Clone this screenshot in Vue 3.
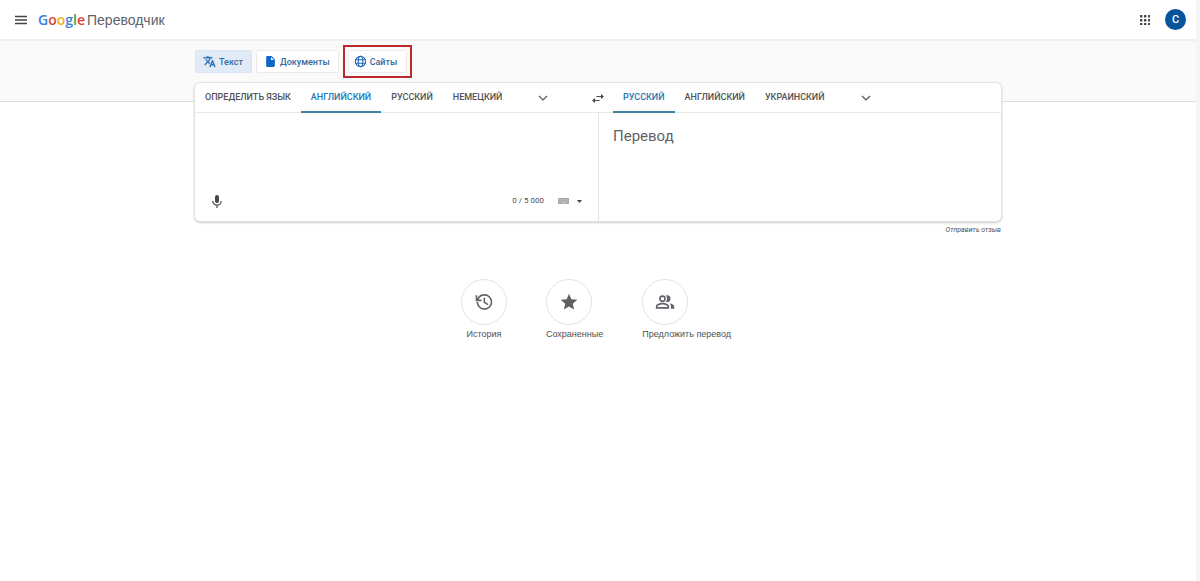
<script setup>
import { ref } from 'vue'

const logo = [
  { ch: 'G', cls: 'blue' },
  { ch: 'o', cls: 'red' },
  { ch: 'o', cls: 'yellow' },
  { ch: 'g', cls: 'blue' },
  { ch: 'l', cls: 'green' },
  { ch: 'e', cls: 'red' },
]
const sourceLangs = ['ОПРЕДЕЛИТЬ ЯЗЫК', 'АНГЛИЙСКИЙ', 'РУССКИЙ', 'НЕМЕЦКИЙ']
const targetLangs = ['РУССКИЙ', 'АНГЛИЙСКИЙ', 'УКРАИНСКИЙ']
const source = ref('АНГЛИЙСКИЙ')
const target = ref('РУССКИЙ')
const text = ref('')
</script>

<template>
  <div class="page">
    <header class="top">
      <button class="icon-btn menu" aria-label="Главное меню">
        <svg width="12" height="10" viewBox="0 0 12 10"><path d="M0 1.5h12M0 5h12M0 8.5h12" stroke="#444" stroke-width="1.3" /></svg>
      </button>
      <a class="brand" href="#">
        <span class="logo"><span v-for="(l, i) in logo" :key="i" :class="l.cls">{{ l.ch }}</span></span>
        <span class="product">Переводчик</span>
      </a>
      <button class="icon-btn apps" aria-label="Приложения">
        <svg width="10" height="10" viewBox="0 0 10 10" fill="#444">
          <template v-for="y in 3" :key="y">
            <rect v-for="x in 3" :key="x" :x="(x - 1) * 4" :y="(y - 1) * 4" width="2.400" height="2.400" rx=".5" />
          </template>
        </svg>
      </button>
      <button class="avatar" aria-label="Аккаунт">С</button>
    </header>

    <div class="band">
      <nav class="modes">
        <button class="mode active">
          <svg width="13" height="13" viewBox="0 0 24 24" fill="#1b66b5" stroke="#1b66b5" stroke-width=".5"><path d="M12.87 15.07l-2.54-2.51.03-.03A17.52 17.52 0 0014.07 6H17V4h-7V2H8v2H1v2h11.17C11.5 7.92 10.44 9.75 9 11.35 8.07 10.32 7.3 9.19 6.69 8h-2c.73 1.63 1.73 3.17 2.98 4.56l-5.09 5.02L4 19l5-5 3.11 3.11.76-2.04zM18.5 10h-2L12 22h2l1.12-3h4.75L21 22h2l-4.5-12zm-2.62 7l1.62-4.33L19.12 17h-3.24z" /></svg>
          <span>Текст</span>
        </button>
        <button class="mode">
          <svg width="13" height="13" viewBox="0 0 24 24" fill="#0b66c8"><path d="M6 2c-1.100 0-2 .9-2 2v16c0 1.100.9 2 2 2h12c1.100 0 2-.9 2-2V8l-6-6H6zm7 7V3.500L18.500 9H13z" /></svg>
          <span>Документы</span>
        </button>
        <div class="highlight">
          <button class="mode">
            <svg width="13" height="13" viewBox="0 0 24 24" fill="none" stroke="#1b66b5" stroke-width="1.900"><circle cx="12" cy="12" r="9.500" /><ellipse cx="12" cy="12" rx="4.300" ry="9.500" /><path d="M3 8.800h18M3 15.200h18" /></svg>
            <span>Сайты</span>
          </button>
        </div>
      </nav>
    </div>

    <main class="content">
      <section class="card">
        <div class="langs">
          <div class="side">
            <button v-for="l in sourceLangs" :key="l" class="tab" :class="{ on: l === source }" @click="source = l">{{ l }}</button>
            <button class="icon-btn more" aria-label="Другие языки">
              <svg width="10" height="6" viewBox="0 0 10 6"><path d="M1 1l4 4 4-4" fill="none" stroke="#555" stroke-width="1.200" /></svg>
            </button>
            <button class="icon-btn swap" aria-label="Поменять языки местами">
              <svg width="12" height="9" viewBox="0 0 12 9" fill="#4a4a4a"><path d="M9 0l3 2.500L9 5V3.100H4.500V1.900H9zM3 4v1.900h4.500v1.200H3V9L0 6.500z" /></svg>
            </button>
          </div>
          <div class="side">
            <button v-for="l in targetLangs" :key="l" class="tab" :class="{ on: l === target }" @click="target = l">{{ l }}</button>
            <button class="icon-btn more" aria-label="Другие языки перевода">
              <svg width="10" height="6" viewBox="0 0 10 6"><path d="M1 1l4 4 4-4" fill="none" stroke="#555" stroke-width="1.200" /></svg>
            </button>
          </div>
        </div>
        <div class="panes">
          <div class="pane">
            <textarea v-model="text" class="input" aria-label="Исходный текст"></textarea>
            <div class="tools">
              <button class="icon-btn" aria-label="Голосовой ввод">
                <svg width="10" height="13" viewBox="0 0 10 13"><rect x="3" y="0" width="4" height="8" rx="2" fill="#484848" /><path d="M.8 6a4.200 4.200 0 008.400 0M5 10v3" fill="none" stroke="#555" stroke-width="1.300" /></svg>
              </button>
              <span class="count">{{ text.length }} / 5 000</span>
              <button class="icon-btn keys" aria-label="Экранная клавиатура">
                <svg width="11" height="6" viewBox="0 0 11 6"><rect width="11" height="6" rx=".5" fill="#aaa" /><path d="M1 1.500h9M1 3h9" stroke="#c4c4c4" stroke-width=".8" stroke-dasharray="1 .6" /><path d="M3 4.700h5" stroke="#ccc" stroke-width=".8" /></svg>
              </button>
              <button class="icon-btn caret" aria-label="Способ ввода">
                <svg width="5" height="3" viewBox="0 0 5 3"><path d="M0 0h5L2.500 3z" fill="#444" /></svg>
              </button>
            </div>
          </div>
          <div class="pane result">Перевод</div>
        </div>
      </section>
      <a class="feedback" href="#">Отправить отзыв</a>

      <div class="actions">
        <button class="action">
          <span class="ring"><svg width="20" height="20" viewBox="0 0 24 24" fill="#5f6368"><path d="M12.500 2.500A9.500 9.500 0 004 7.800V4H2v7h7V9H5.600a7.500 7.500 0 11-.6 3H3a9.500 9.500 0 109.500-9.500zM11.500 7v6l4.800 2.900 1-1.600-3.900-2.300V7z" /></svg></span>
          <span class="label">История</span>
        </button>
        <button class="action">
          <span class="ring"><svg width="20" height="20" viewBox="0 0 24 24" fill="#606060"><path d="M12 17.270L18.180 21l-1.640-7.030L22 9.240l-7.190-.61L12 2 9.190 8.630 2 9.240l5.460 4.730L5.820 21z" /></svg></span>
          <span class="label">Сохраненные</span>
        </button>
        <button class="action">
          <span class="ring"><svg width="20" height="20" viewBox="0 0 24 24" fill="#5f6368"><path d="M9 12a4 4 0 100-8 4 4 0 000 8zm0-6.100a2.100 2.100 0 110 4.200 2.100 2.100 0 010-4.200zM9 13c-3 0-8 1.400-8 4.300V20h16v-2.700C17 14.400 12 13 9 13zm6.100 5.100H2.900v-.8c0-.8 3.100-2.400 6.100-2.400s6.100 1.600 6.100 2.400zM14.500 12a4 4 0 000-8c-.5 0-1 .1-1.400.3a6 6 0 010 7.400c.4.200.9.300 1.400.3zM17.500 13.400c1 .9 1.700 2.200 1.700 3.900V20H23v-2.700c0-2.100-2.700-3.400-5.500-3.900z" /></svg></span>
          <span class="label">Предложить перевод</span>
        </button>
      </div>
    </main>
  </div>
</template>

<style>
body {
  background: #fff;
  border-right: 4px solid #f5f5f5;
}
</style>

<style scoped>
.page {
  min-height: 100vh;
  font-family: Roboto, "Liberation Sans", sans-serif;
  color: #505357;
}
button {
  font: inherit;
  color: inherit;
  border: 0;
  padding: 0;
  margin: 0;
  background: none;
  cursor: pointer;
}
a {
  color: inherit;
  text-decoration: none;
}
svg {
  display: block;
  flex: none;
}
.icon-btn {
  display: flex;
  align-items: center;
  justify-content: center;
}
.top {
  display: flex;
  align-items: center;
  height: 39px;
  padding: 0 10px 0 15px;
}
.brand {
  display: flex;
  align-items: baseline;
  gap: 2px;
  margin-left: 11px;
}
.logo {
  font: 600 14px/20px "Open Sans", sans-serif;
}
.product {
  font: 14px/20px "Liberation Sans", sans-serif;
  color: #5f6368;
}
.blue { color: #3c80dc; }
.red { color: #dc4437; }
.yellow { color: #eeb211; }
.green { color: #35a351; }
.apps {
  margin-left: auto;
}
.avatar {
  width: 21px;
  height: 21px;
  margin-left: 15px;
  border-radius: 50%;
  background: #07549b;
  color: #fff;
  font-size: 11px;
  font-weight: 500;
  line-height: 21px;
}
.band {
  height: 60px;
  background: #fafafa;
  border-top: 2px solid #f0f0f0;
  border-bottom: 1px solid #dedede;
}
.modes {
  display: flex;
  align-items: center;
  gap: 4px;
  max-width: 806px;
  margin: 0 auto;
  padding-top: 4px;
}
.mode {
  display: flex;
  align-items: center;
  gap: 3px;
  height: 23px;
  padding: 0 8px 0 7px;
  border: 1px solid #ebebeb;
  border-radius: 2px;
  background: #fff;
  color: #35699f;
  font-size: 9px;
  font-weight: 500;
  line-height: 12px;
}
.mode.active {
  background: #e1ebf7;
  border-color: #dae6f3;
}
.highlight {
  padding: 3px;
  border: 2px solid #bd2a2c;
}
.highlight .mode {
  padding: 0 9px 0 5px;
}
.content {
  max-width: 806px;
  margin: -19px auto 0;
}
.card {
  background: #fff;
  border-radius: 5px;
  box-shadow: 0 0 0 1px #e2e2e2, 0 1px 3px 0 #999;
}
.langs {
  display: grid;
  grid-template-columns: 1fr 1fr;
  height: 29px;
  border-bottom: 1px solid #e8e8e8;
}
.side {
  display: flex;
}
.side + .side {
  padding-left: 15px;
}
.tab {
  height: 30px;
  padding: 0 10px;
  border-bottom: 2px solid transparent;
  font-size: 9px;
  font-weight: 500;
  line-height: 29px;
  white-space: nowrap;
}
.tab.on {
  color: #1c78b4;
  border-bottom-color: #3d82a5;
}
.more {
  margin-left: 26px;
}
.swap {
  margin-left: auto;
  margin-right: -6px;
}
.panes {
  display: grid;
  grid-template-columns: 1fr 1fr;
  min-height: 106px;
}
.pane {
  display: flex;
  flex-direction: column;
}
.input {
  flex: 1;
  min-height: 0;
  padding: 12px 16px;
  border: 0;
  outline: 0;
  resize: none;
  background: transparent;
  font: 15px/22px Roboto, sans-serif;
  color: #333;
}
.tools {
  display: flex;
  align-items: center;
  height: 40px;
  padding: 0 16px 0 17px;
}
.count {
  margin-left: auto;
  font-size: 8px;
  line-height: 12px;
}
.keys {
  margin-left: 14px;
}
.caret {
  margin-left: 8px;
}
.result {
  padding: 12px 14px;
  border-left: 1px solid #e2e2e2;
  font-size: 15px;
  line-height: 22px;
  color: #5f6368;
}
.feedback {
  display: block;
  width: fit-content;
  margin: 3px 0 0 auto;
  font-size: 7px;
  font-style: italic;
  line-height: 12px;
}
.actions {
  display: flex;
  justify-content: center;
  gap: 39px;
  margin-top: 43px;
  padding-right: 4px;
}
.action {
  display: flex;
  flex-direction: column;
  align-items: flex-start;
  gap: 3px;
  font: 9px/12px "Liberation Sans", sans-serif;
}
.label {
  min-width: 100%;
  text-align: center;
}
.ring {
  display: flex;
  align-items: center;
  justify-content: center;
  width: 44px;
  height: 44px;
  border: 1px solid #e2e2e2;
  border-radius: 50%;
}
</style>
